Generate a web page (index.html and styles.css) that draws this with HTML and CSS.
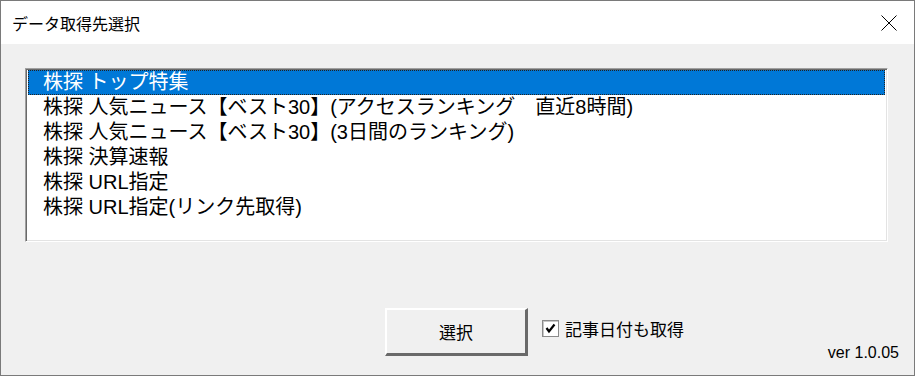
FILE: index.html
```html
<!DOCTYPE html>
<html lang="ja">
<head>
    <meta charset="UTF-8">
    <title>データ取得先選択</title>
    <link rel="stylesheet" href="styles.css">
</head>
<body>

<div class="window">
    <div class="titlebar">
        <span class="title">データ取得先選択</span>
        <span class="close-btn">
            <svg width="16" height="16" viewBox="0 0 16 16">
                <path d="M0.5 0.5 L15.5 15.5 M15.5 0.5 L0.5 15.5" stroke="#000" stroke-width="1" fill="none"/>
            </svg>
        </span>
    </div>

    <div class="content">
        <ul class="listbox">
            <li class="item selected">株探 トップ特集</li>
            <li class="item">株探 人気ニュース【ベスト30】(アクセスランキング　直近8時間)</li>
            <li class="item">株探 人気ニュース【ベスト30】(3日間のランキング)</li>
            <li class="item">株探 決算速報</li>
            <li class="item">株探 URL指定</li>
            <li class="item">株探 URL指定(リンク先取得)</li>
        </ul>

        <div class="footer">
            <button class="btn">選択</button>
            <label class="check">
                <span class="check-box">
                    <svg width="11" height="11" viewBox="0 0 11 11">
                        <path d="M1.5 5 L4 8.5 L9.5 1.5" stroke="#000" stroke-width="2.2" fill="none"/>
                    </svg>
                </span>
                記事日付も取得
            </label>
            <span class="version">ver 1.0.05</span>
        </div>
    </div>
</div>

</body>
</html>
```

FILE: styles.css
```css
/* ダイアログ */
body {
    margin: 0;
    padding: 0;
    background-color: #f0f0f0;
    font-family: "Noto Sans CJK JP", sans-serif;
}

.window {
    width: 915px;
    height: 376px;
    box-sizing: border-box;
    border: 1px solid #7a7a7a;
    display: flex;
    flex-direction: column;
    background-color: #f0f0f0;
}

.titlebar {
    height: 43px;
    background-color: #fff;
    display: flex;
    align-items: center;
    padding: 0 16px 0 11px;
}

.title {
    font-size: 16px;
    color: #000;
    flex: 1;
}

.close-btn {
    display: flex;
    margin-right: 1px;
}

.content {
    flex: 1;
    display: flex;
    flex-direction: column;
    padding: 24px 25px 0 24px;
}

.listbox {
    list-style: none;
    margin: 0;
    padding: 0;
    width: 863px;
    height: 174px;
    box-sizing: border-box;
    background-color: #fff;
    border-top: 1px solid #a0a0a0;
    border-left: 1px solid #a0a0a0;
    border-right: 1px solid #fff;
    border-bottom: 1px solid #fff;
    box-shadow: inset 1px 1px 0 #696969, inset -1px -1px 0 #e3e3e3;
    padding: 1px 2px 0 2px;
}

.item {
    height: 25px;
    line-height: 25px;
    font-family: "Liberation Sans", "Noto Sans CJK JP", sans-serif;
    font-size: 20px;
    padding-left: 15px;
    color: #000;
    white-space: nowrap;
    box-sizing: border-box;
}

.item.selected {
    background-color: #0078d7;
    color: #fff;
    outline: 1px dotted #222;
    outline-offset: -1px;
}

.footer {
    display: flex;
    align-items: flex-start;
    padding: 66px 0 0 360px;
}

.btn {
    width: 143px;
    height: 48px;
    font-family: "Noto Sans CJK JP", sans-serif;
    font-size: 17px;
    color: #000;
    background-color: #f0f0f0;
    border-top: 2px solid #fff;
    border-left: 2px solid #fff;
    border-right: 3px solid #696969;
    border-bottom: 3px solid #696969;
    padding: 0;
}

.check {
    display: flex;
    align-items: center;
    font-size: 17px;
    color: #000;
    margin: 8px 0 0 14px;
    gap: 6px;
}

.check-box {
    width: 17px;
    height: 17px;
    box-sizing: border-box;
    background-color: #fff;
    border: 1px solid #8a8a8a;
    box-shadow: inset 1px 1px 0 #c8c8c8;
    display: flex;
    align-items: center;
    justify-content: center;
}

.version {
    margin-left: auto;
    align-self: flex-end;
    margin-bottom: -6px;
    margin-right: -10px;
    font-family: "Liberation Sans", sans-serif;
    font-size: 16px;
    color: #000;
}
```
